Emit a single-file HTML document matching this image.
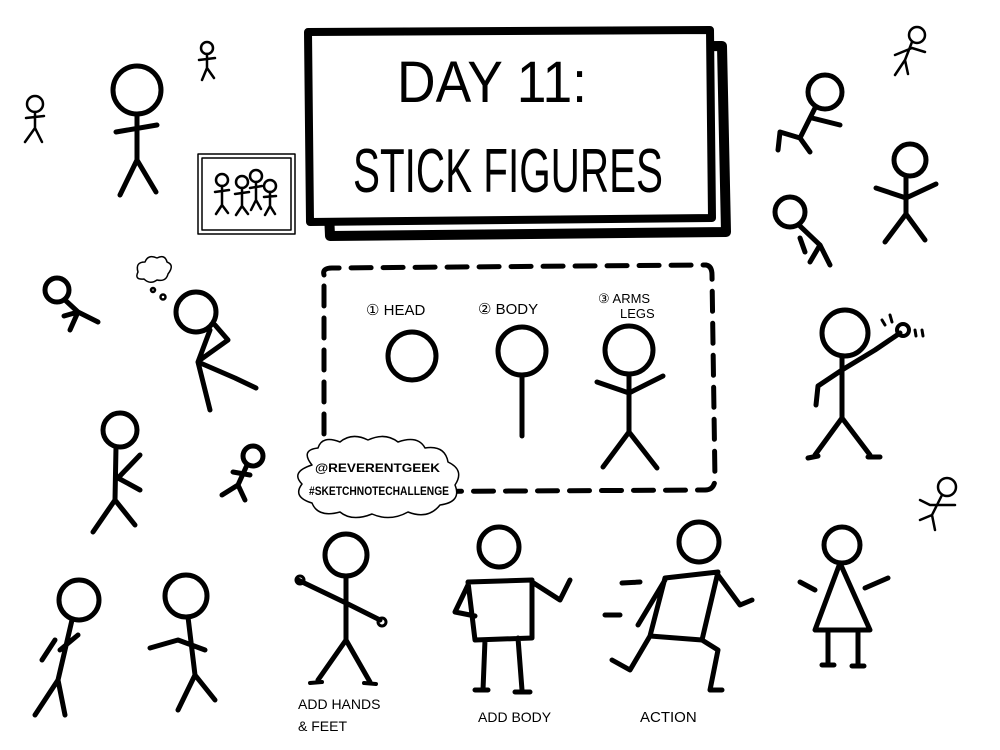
<!DOCTYPE html>
<html><head><style>
html,body{margin:0;padding:0;background:#fff;}
svg{display:block;}
text{font-family:"Liberation Sans",sans-serif;fill:#000;}
</style></head><body>
<svg width="1000" height="750" viewBox="0 0 1000 750" xmlns="http://www.w3.org/2000/svg">
<rect width="1000" height="750" fill="#fff"/>
<g fill="none" stroke="#000" stroke-linecap="round" stroke-linejoin="round">
<path d="M322 48 L722 46 L726 232 L330 236 Z" stroke-width="10"/>
<path d="M308 32 L710 30 L712 218 L310 222 Z" fill="#fff" stroke-width="8"/>
<path d="M324 275 Q322 268 332 268 L706 265 Q712 266 712 275 L715 480 Q714 490 705 490 L330 492 Q324 490 324 482 Z" stroke-width="5" stroke-dasharray="20 12"/>
<rect x="198" y="154" width="97" height="80" stroke-width="1.5"/>
<rect x="202" y="158" width="89" height="72" stroke-width="1.5"/>
<g stroke-width="2.5">
<circle cx="222" cy="180" r="6"/><path d="M222 186V205M215 192L229 190M222 205L216 214M222 205L228 213"/>
<circle cx="242" cy="182" r="6"/><path d="M242 188V206M235 194L249 192M242 206L236 215M242 206L248 214"/>
<circle cx="256" cy="176" r="6"/><path d="M256 182V200M250 188L262 186M256 200L251 210M256 200L261 209"/>
<circle cx="270" cy="186" r="6"/><path d="M270 192V206M264 197L276 196M270 206L265 215M270 206L275 214"/>
</g>
<g stroke-width="5">
<circle cx="412" cy="356" r="24"/>
<circle cx="522" cy="351" r="24"/><path d="M522 375V436"/>
<circle cx="629" cy="350" r="24"/><path d="M629 374V432M597 382L629 393L663 376M629 432L603 467M629 432L657 468"/>
<circle cx="137" cy="90" r="24"/><path d="M137 114V160M116 132L157 125M137 160L120 195M137 160L156 192"/>
<circle cx="120" cy="430" r="17"/><path d="M116 447L115 500M140 455L118 478L140 490M115 500L93 532M115 500L135 525"/>
<circle cx="196" cy="312" r="20"/><path d="M210 330L198 362M215 325L228 340L200 360M198 362L210 410M198 362L235 378L256 388"/>
<circle cx="57" cy="290" r="12"/><path d="M65 300L78 312M78 312L70 330M78 312L98 322M64 316L78 312"/>
<circle cx="79" cy="600" r="20"/><path d="M72 620L58 680M55 640L42 660M78 635L60 650M58 680L35 715M58 680L65 715"/>
<circle cx="186" cy="596" r="21"/><path d="M188 617L195 675M150 648L178 640L205 650M195 675L178 710M195 675L215 700"/>
<circle cx="346" cy="555" r="21"/><path d="M346 576V640M298 580L346 603L380 620M346 640L318 680M346 640L370 682"/>
<circle cx="300" cy="580" r="4" stroke-width="3"/><circle cx="382" cy="622" r="4" stroke-width="3"/>
<path d="M310 683L322 682M364 683L376 684" stroke-width="4"/>
<circle cx="499" cy="547" r="20"/><path d="M468 582L532 580L532 638L475 640Z M468 585L455 612L475 616M532 582L560 600L570 580M485 640L483 690M518 638L522 690M475 690L488 690M515 692L530 692"/>
<circle cx="699" cy="542" r="20"/><path d="M665 578L718 572L702 640L650 636Z M665 580L638 625M718 575L740 605L752 600M650 636L630 670L612 660M702 640L718 650L710 690L722 690M622 583L640 582M605 615L620 615"/>
<circle cx="842" cy="545" r="18"/><path d="M840 563L815 630L870 630Z M815 590L800 582M865 588L888 578M828 630L828 664M858 630L858 664M822 665L834 665M852 666L864 666"/>
<circle cx="845" cy="333" r="23"/><path d="M842 356V418M842 370L875 350L900 333M842 370L818 386L816 405M842 418L815 455M842 418L870 455M808 458L818 456M868 457L880 457"/>
<circle cx="903" cy="330" r="6" stroke-width="4"/>
<path d="M882 320L885 325M890 315L892 322M915 330L916 336M922 330L923 336" stroke-width="3"/>
<circle cx="825" cy="92" r="17"/><path d="M815 108L800 138M812 118L840 125M800 138L780 132L778 150M800 138L810 152"/>
<circle cx="910" cy="160" r="16"/><path d="M906 176V214M876 188L906 198L936 184M906 214L885 242M906 214L925 240"/>
<circle cx="790" cy="212" r="15"/><path d="M800 226L820 245M800 238L805 252M820 245L810 262M820 245L830 265"/>
<circle cx="253" cy="456" r="10"/><path d="M247 465L238 485M233 472L250 475M238 485L222 495M238 485L245 500"/>
</g>
<g stroke-width="2.5">
<circle cx="35" cy="104" r="8"/><path d="M35 112V128M26 118L44 116M35 128L25 142M35 128L42 142"/>
<circle cx="207" cy="48" r="6"/><path d="M207 54V68M199 60L215 58M207 68L202 80M207 68L214 78"/>
<circle cx="917" cy="35" r="8"/><path d="M912 42L905 60M895 55L912 48L925 52M905 60L895 75M905 60L908 74"/>
<circle cx="947" cy="487" r="9"/><path d="M942 495L932 515M920 500L930 505L955 505M932 515L920 520M932 515L935 530"/>
<path d="M138 272Q135 262 145 262Q148 254 157 258Q165 254 167 262Q175 265 168 274Q166 282 157 280Q150 285 144 279Q134 280 138 272Z" stroke-width="1.5"/>
<circle cx="153" cy="290" r="2"/><circle cx="163" cy="297" r="2.5"/>
<path d="M312 465Q300 450 318 448Q322 435 340 442Q352 432 368 440Q385 432 398 442Q418 435 425 448Q445 445 448 462Q465 470 455 485Q462 502 440 505Q428 520 408 512Q390 522 372 514Q352 522 340 512Q318 518 312 503Q292 497 302 484Q290 472 312 465Z" fill="#fff" stroke-width="1.5"/>
</g>
</g>
<text x="492" y="102" font-size="58" text-anchor="middle" textLength="190" lengthAdjust="spacingAndGlyphs">DAY 11:</text>
<text x="508" y="192" font-size="62" text-anchor="middle" textLength="310" lengthAdjust="spacingAndGlyphs">STICK FIGURES</text>
<text x="366" y="315" font-size="15">① HEAD</text>
<text x="478" y="314" font-size="15">② BODY</text>
<text x="598" y="303" font-size="13">③ ARMS</text>
<text x="620" y="318" font-size="13">LEGS</text>
<text x="315" y="472" font-size="12" font-weight="bold" textLength="125" lengthAdjust="spacingAndGlyphs">@REVERENTGEEK</text>
<text x="309" y="495" font-size="12" font-weight="bold" textLength="140" lengthAdjust="spacingAndGlyphs">#SKETCHNOTECHALLENGE</text>
<text x="298" y="709" font-size="14">ADD HANDS</text>
<text x="298" y="731" font-size="14">&amp; FEET</text>
<text x="478" y="722" font-size="14">ADD BODY</text>
<text x="640" y="722" font-size="15">ACTION</text>
</svg>
</body></html>
